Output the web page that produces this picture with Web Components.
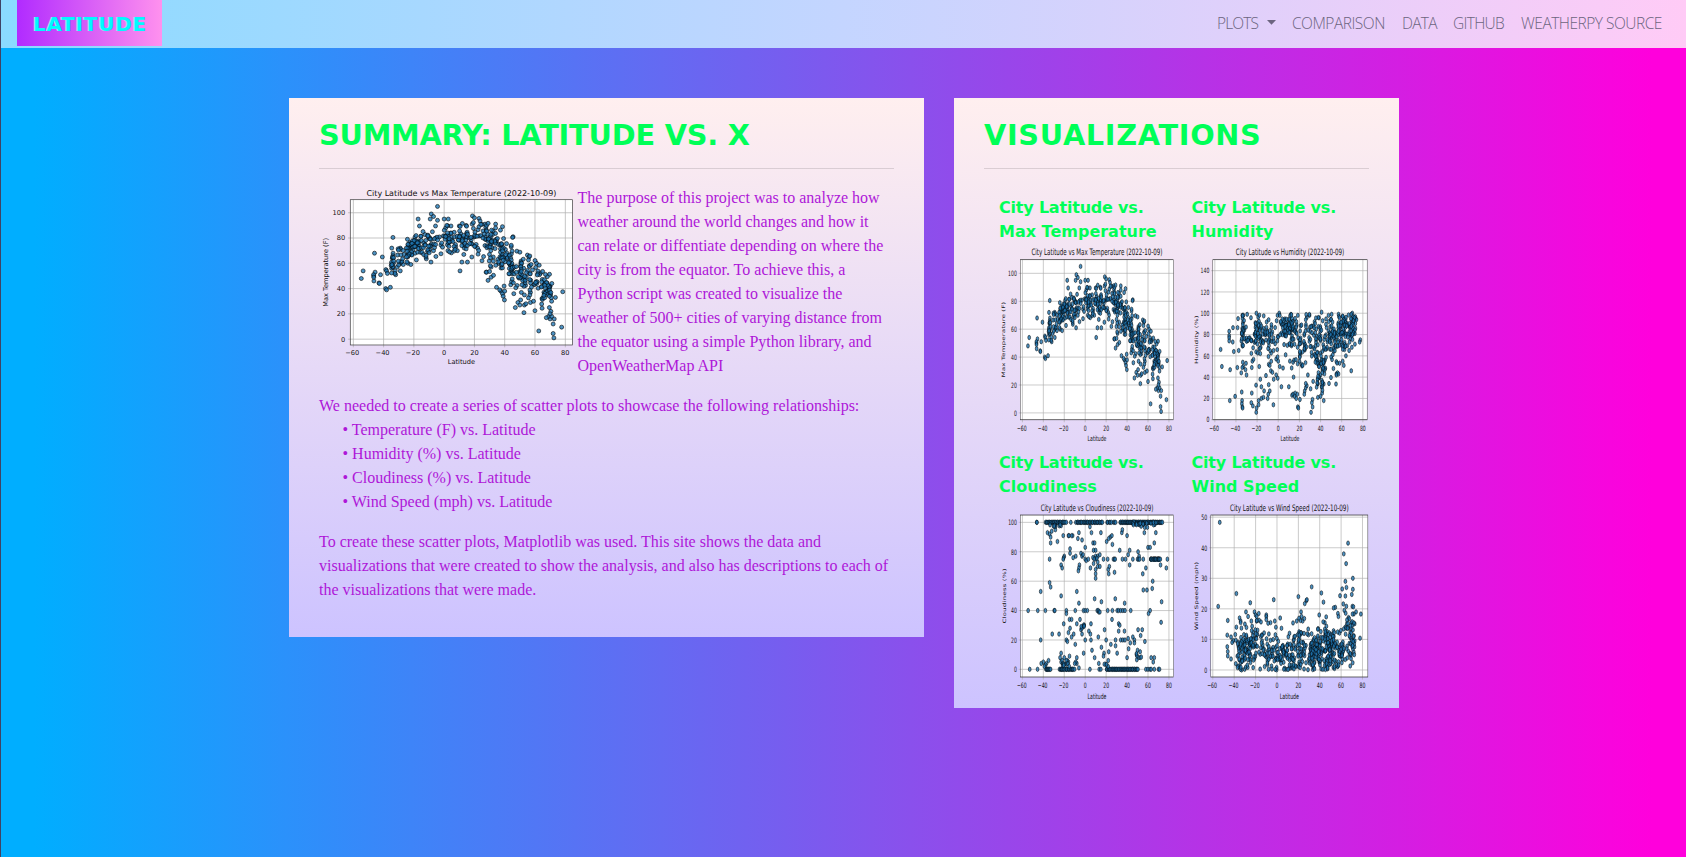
<!DOCTYPE html>
<html lang="en">
<head>
<meta charset="utf-8">
<title>Latitude</title>
<style>
html{height:100%}
body{margin:0;min-height:857px;box-sizing:border-box;border-left:1px solid #3f4364;background:linear-gradient(90deg,#00aeff 2%,#2b91fb 17%,#8a50ec 54%,#d41ee2 83%,#ff00dc 98%);font-family:"Liberation Serif",serif;overflow:hidden}
</style>
</head>
<body>
<latitude-page></latitude-page>
<script>
/* Base class: clones the markup of the element into an open shadow root. */
class Base extends HTMLElement{
  constructor(){super();const t=document.createElement('template');t.innerHTML=this.constructor.html;this.attachShadow({mode:'open'}).append(t.content.cloneNode(true));}
}

class NavLink extends Base{
  static html=`<style>:host{display:block;font:300 15.5px/24px "Open Sans",sans-serif;color:#6c6580;white-space:nowrap}
  a{display:flex;align-items:center;justify-content:space-between}
  svg{display:none}:host([caret]) svg{display:block;margin-top:-2px}</style>
  <a><span><slot></slot></span><svg width="9" height="5" viewBox="0 0 9 5"><path d="M0 0H9L4.5 4.8Z" fill="currentColor"/></svg></a>`;
}
customElements.define('nav-link',NavLink);

class SiteNav extends Base{
  static html=`<style>
  :host{display:flex;height:48px;align-items:flex-start;justify-content:space-between;padding:0 24px 0 16px;box-sizing:border-box;background:linear-gradient(90deg,#8adbff,#c4d5ff 50%,#ffcbf6)}
  .brand{width:145px;height:46px;box-sizing:border-box;padding-left:16px;background:linear-gradient(90deg,#b12bff,#ff91ee);font:bold 20px/48px "DejaVu Sans",sans-serif;color:#00fbff;text-shadow:-1px 0 0 #a5c8f1;letter-spacing:.75px;white-space:nowrap}
  nav{display:flex;padding-top:11px}
  nav-link{margin-left:16px}
  </style><div class="brand">LATITUDE</div>
  <nav><nav-link caret style="width:59px;letter-spacing:-.9px">PLOTS</nav-link><nav-link style="width:94px;letter-spacing:-.5px">COMPARISON</nav-link><nav-link style="width:35px;letter-spacing:-.7px">DATA</nav-link><nav-link style="width:52px;letter-spacing:-.7px">GITHUB</nav-link><nav-link style="width:141px;letter-spacing:-.5px">WEATHERPY SOURCE</nav-link></nav>`;
}
customElements.define('site-nav',SiteNav);

class InfoCard extends Base{
  static html=`<style>
  :host{display:block;box-sizing:border-box;padding:18px 30px 0;background:linear-gradient(#ffefef,#cdc3ff)}
  h2{margin:0;height:52px;font:bold 28.8px/38px "DejaVu Sans",sans-serif;color:#00ff57;white-space:nowrap;letter-spacing:var(--ls,0)}
  .rule{height:1px;background:rgba(0,0,0,.12);margin-bottom:16px}
  </style><h2><slot name="title"></slot></h2><div class="rule"></div><slot></slot>`;
}
customElements.define('info-card',InfoCard);

/* Small deterministic generator, so that the clouds of cities stay the same. */
function rng(s){return()=>{s|=0;s=s+0x6D2B79F5|0;let t=Math.imul(s^s>>>15,1|s);t=t+Math.imul(t^t>>>7,61|t)^t;return((t^t>>>14)>>>0)/4294967296}}
const pairs=s=>s.trim().split(/\s+/).map(p=>p.split(',').map(Number));
const gauss=r=>(r()+r()+r()+r()-2)*1.72;
function lerp(t,x){for(let i=1;i<t.length;i++)if(x<=t[i][0]){const[a,b]=t[i-1],[c,d]=t[i];return b+(d-b)*(x-a)/(c-a)}return t[t.length-1][1]}

const temp=pairs(`-54.7,48 -53.5,54 -46,68 -45.6,53 -46.5,50 -46.4,46 -46.6,51 -46.5,49 -43,44.5 -42.8,44 -42,51 -40.8,65 -38.5,55 -38,54 -38.6,40 -38,39 -35.5,41 -37.5,52 -33.8,80.5 -34.6,72 -29,72 -29,54 -32,51 -32.3,54 -17.2,95 -16.3,89.5 -8.5,99 -7,97 -9.2,95 -4.4,105 -4.4,94 -5.7,89.5 0,95 2.7,95 4.5,89.5 1,88 -8.7,61 -11.8,63.5 -12,65 -7,70 11.7,61 15.4,61 10.5,54 13,67 18.3,65 13.3,72 18.7,97.5 20,96 23,95.5 23.7,93.5 12,91.5 10,89.5 14.5,90 18.5,91 34,91 34,88 27,91 27.5,88.5 28,90 38.5,89 45.5,81 45.2,80.5 44.3,73 25,62 27.7,53 28,53 29,46.5 31,49 30,53.5 32.6,50.5 34.6,41 31,57 30.5,58 37.5,38 36.7,39 39.6,42 38.5,36 39,34 39.8,31 40,38 44,43 44.5,45.5 46,36 47,25 48.7,29 50,27 50.5,31 51,37 52.7,21 53,27 54,28 53,35 60,22.5 62.5,6.5 55,66.5 56,65 61,60 62.8,58.5 70,16 69,18 67.5,17 70.5,22 72,12 72.7,16 72,4.5 72.5,1 77.6,9.5 78.3,37.5 73.5,33 71,30 69.5,25 71,18 70,20 57,37 57,29 59,30 -33.7,68 -33.9,66 -34.2,64 -33.5,60 -34.4,58 -32.6,52 -31,57 -29,60 -27,59 -24,60 -22,59 -34.7,56`);
{const r=rng(11);const mean=[[-36,58],[-32,61],[-26,67],[-22,74],[-15,76],[-5,78],[8,78],[20,82],[28,77],[34,73],[40,65],[48,54],[54,51],[60,46],[66,41],[71,39]];
 const bands=[[-35,-33,11,5],[-31,-25,12,5],[-25,-16,52,4.5],[-16,0,46,5.5],[0,15,58,5],[15,30,44,7],[29,38,44,7],[37,45,42,7],[44,57,48,8],[56,66,32,8],[64,71.5,36,5]];
 for(const[a,b,n,s]of bands)for(let i=0;i<n;i++){const x=a+(b-a)*r();temp.push([x,Math.min(96,lerp(mean,x)+gauss(r)*s)])}}

const hum=pairs(`-54.5,66 -53.3,50 -45.8,18 -45.5,47 -46.4,83 -46.4,79 -46.4,77 -46.4,74 -42.8,86.5 -42,64 -43,73 -38.5,86.5 -38,95 -37.4,65 -38.7,49 -40.8,22 -34,98 -33,98 -34.5,26 -34.2,18 -34.4,15 -34,12 -33.7,11 -29.4,99 -20.7,100 -30,42 -35,44 -33.5,54 -33,50 -34,49 -31,47 -30.5,53 -24.5,55 -25,49 -25,25 -25.5,16 -24,13 -20.8,7 -20.5,11 -18.5,18 -18.6,14 -21,32.5 -17,38 -16,31 -13.4,27 -18,50 -16,20 -14,21 -9.5,24 -10,20 -8,27 -9,33 -11.6,41.5 -4.6,14 -4.3,38 -7,46 -5.5,44.5 -2,42 -.5,39 -9,52 1.4,50 4.5,48.5 -2,57 0,55 3,31 10,31 14.5,40 -8,51 -.7,98 1,100 1.5,98 12,99 18.5,98 7,61 11,55 14,54 15,56 20,55 22,52 22.5,50.5 13,23 14,24 16,25 15.5,22 18,24 20.5,19 18.5,12 19,11 17,20 25,27 24.6,24 26,30 27,32 26,34 28,42 30.6,29 33,36 32.4,19 31,7 32.5,12 31.8,16 37.5,21 40,22 43,18 41.6,25 41,31 43,33.5 48,34 54.6,33.5 55,43 56,44 57,43 55,42 58,53 62,51 61,55 69,46 64,60 67,65 77.6,75 77,73 73.3,95 74,94 72,96 72.5,71 70,100 69,99 57,99 61,97 50.5,99 47.5,98 41,101 42,93 29.6,98 27,96 26,94 30,87`);
{const r=rng(29);const bands=[[-35,-32,24,84,8],[-31,-27,7,78,9],[-26,-16,50,79,10],[-16,0,48,80,10],[3,14,52,87,6],[0,14,10,78,9],[12,32,48,77,13],[19,32,18,67,5],[33,40,22,73,14],[35,46,26,50,8],[36,42,14,36,4],[34,55,62,75,14],[48,58,32,74,14],[56,73,72,87,8],[60,71,20,74,7]];
 for(const[a,b,n,m,s]of bands)for(let i=0;i<n;i++){let y=m+gauss(r)*s;if(y>99)y=92-r()*14;hum.push([a+(b-a)*r(),Math.max(8,y)])}}

const cloud=pairs(`-54.5,40 -45.3,40 -38,40 -29.6,40 -29,40 -18,40 -18,38 -9.5,40 -1.6,40 0,40 2,40 11.5,40 12.5,40 13,39 14,39 21.5,40 26,40 30.6,40 32,40 34,40 36,40 38,40 43.5,40 62,40 60.5,38 -42.5,53 -34,59 -33,56 -23,50 -8,53 -6,45 9,48 15.5,46 28.7,48 37.7,45 73,46 72.5,32 55.5,54 59,54 64,55 64.5,60 55,65 -34,75 -33,86 -36,93 -34,92 -33,90 -32,94 -28.5,95 -26.5,87 -21,91 -16,91 -15.5,91 -12,91 -13,91 -14.5,82 -14.5,79 -20,77 -20.5,76 -21,75 -23,71 -22,69 -9,77 -11.5,76 -6,93 -7,89 -3,88 0,83 -4,79 -3,77 -2,78 0,75 1,74 3,75 4.5,97 6,93 5,69 7.5,86 9,86 8,81 10,81 10,77 12,77 14,78 8,72 10,68 12,70 12,73 14,70 10,65 10,62 -5.5,71 -6,69 -6.5,67 20.5,87 24,90 22.5,89 25.5,91 26,85 15,93 17.5,75 21.5,75 22,68 22.5,65 23,70 28,66 27,75 28,75 28.6,75 33,81 35,93 35.5,95 35.6,75 38.5,75 40,91 42.5,81 41,78 42.5,71 45.5,75 50.5,80 51.5,77 50,75 51,75 52,75 55.5,75 56.5,93 58,69 60,83 62,83 66,86 67.5,93 62.7,75 65,75 66,75 67.5,75 69,75 70,75 71,75 72,71 78.5,75 77.5,69 -42.5,20 -31.5,24 -25,24 -18,20 -17,19 -20.5,31 -15,34 -13,34 -16,25 -14.5,28 -13,22 -11,24 -9.5,17 -8,31 -5,34 -4,27 -3,24 -2,29 -1,30 0,20 3.5,26 5.5,31 5,24 5.5,20 6.5,13 -1.5,11 12.5,22 15.5,15 18.5,27 20,20 22.5,12 24.5,17 25.6,34 29,16 29,20 32,31 33,30 32,26 37.5,26 34,20 36,20 38,20 41,21 41.5,14 45.5,22 47,20 47,18 50.5,27 54.5,27 53,23 57,19 43,18 50,13 52.5,12 51,8 52.5,8 49,10 40,8 30.5,11 22,6 18,11 17.5,9 9,8 13,4 63,8 66,8 65,5 -53,0 -45.5,0 -37.5,0 4.5,0 -6,1 -8,4 -8,8 -9,5 -10,4 -15,9 -16,5 -17,6 -23,11 -24,8 -23,5 -22,6 -20,8 -18,6 -35,6 -37,4 -38,3 -40,5 -42,4 -39,2 58,0 60,0 62,0 63,0 66,0 70,0 71,0`);
{const r=rng(5);
 /* rows of equal values, spread evenly along the latitude */
 for(const[a,b,n,y]of[[-46.5,-46,2,100],[-38,-18,26,100],[-14,-13,1,100],[-9,17,32,100],[20,30,8,100],[33,74,62,100],[-37,-33,7,0],[-25,-10,20,0],[13,16,2,0],[20,51,42,0],[62,72,14,75]])for(let i=0;i<n;i++)cloud.push([a+(b-a)*(i+r())/n,y]);
 for(const[a,b,n,y]of[[-35,-22,9,98],[42,72,22,98.7],[-22,-14,8,3],[46,54,4,9],[-4,1,4,29],[5,14,4,75],[18,22,4,3]])for(let i=0;i<n;i++)cloud.push([a+(b-a)*r(),y+gauss(r)*.9])}

const wind=pairs(`-53.5,48.3 -55,20.8 -46,16.2 -38,25 -25,22 -3,23 3,17 20,24 27.5,22.7 28,23 26,21.7 32.5,27.2 41.5,25.2 43.5,22.2 39.5,18 54.5,20.5 53,20.3 66.5,41.5 62.5,38 64.7,34.8 71,30 64,29 65,27 61,26.5 71,26.4 59,24.3 64,24.2 70,24.7 62,21.6 70.5,20.8 71.5,20.7 74,19 78.5,18.3 77.7,10.4 63,19.5 57,18.5 57.5,17.5 -29,19 -27,17.5 -21,19 -20,18 -17,18.5 -19,17.5 -10,18 -10,17.5 -10,16.5 -35,17 -34,16 -34,15.5 -30,15 -46.5,11.4 -46.5,7.6 -46,6 -46,4.6 -43,10.8 -41,9.6 -42,9 -43,3.6 -24,16 -19,16 -6,15.5 -2,16 -1,14 15,15.4 18.5,16 22.5,19 23,17.5 24,16 22,16.2 -39,11.6 -38,14 29,0.1 57,1.2 68.5,1.3`);
{const r=rng(77);for(const[a,b,n,m,s]of[[-39,-30,28,7,3.3],[-35,-24,34,5,3.4],[-30,-13,66,8,3.5],[-13,0,46,5,4.2],[0,20,84,5,3.6],[20,34,62,6,4.2],[32,53,125,6,3.2],[36,54,32,11,3],[52,62,40,7,4],[60,73,42,8,3.5],[62,72,22,14,3]])for(let i=0;i<n;i++)wind.push([a+(b-a)*r(),Math.abs(m+gauss(r)*s)])}

const T=[-60,-40,-20,0,20,40,60,80];
const charts={
 main:{data:temp,name:'Max Temperature',yl:'Max Temperature (F)',tw:286,yw:103,lx:17,x:[-62,84.8],y:[-4.6,110.3],step:20,top:100,box:[6.9,12.55,388.6,275.4]},
 temp:{data:temp,name:'Max Temperature',yl:'Max Temperature (F)',tw:286,yw:103,lx:17.7,x:[-62,84.5],y:[-4.9,109.8],step:20,top:100,box:[7.5,11.9,388.6,271.7],soft:1},
 humidity:{data:hum,name:'Humidity',yl:'Humidity (%)',tw:235,yw:66,lx:18.7,x:[-61.9,84.1],y:[0,150.3],step:20,top:140,box:[8.9,11.9,386,271.7],soft:1},
 cloudiness:{data:cloud,name:'Cloudiness',yl:'Cloudiness (%)',tw:246,yw:74,lx:18.4,x:[-62,84.5],y:[-5.2,105],step:20,top:100,box:[7.5,11.7,388.6,268.5],soft:1},
 wind:{data:wind,name:'Wind Speed',yl:'Wind Speed (mph)',tw:253,yw:92,lx:23.5,x:[-61.9,85],y:[-2.3,50.7],step:10,top:50,box:[13.9,11.7,379.5,268.5],soft:1}
};
class ScatterPlot extends HTMLElement{
  connectedCallback(){
    if(this.shadowRoot)return;
    const c=charts[this.getAttribute('plot')],L=54,R=388.8,U=34.56,B=252;
    const X=v=>+(L+(v-c.x[0])/(c.x[1]-c.x[0])*(R-L)).toFixed(1),Y=v=>+(B-(v-c.y[0])/(c.y[1]-c.y[0])*(B-U)).toFixed(1);
    let g='',t='';
    for(const v of T){g+=`M${X(v)} ${U}V${B+3.5}`;t+=`<text x="${X(v)-(v<0?1.5:0)}" y="266.8" text-anchor="middle">${String(v).replace('-','−')}</text>`}
    for(let v=0;v<=c.top;v+=c.step){g+=`M${L-3.5} ${Y(v)}H${R}`;t+=`<text x="46.5" y="${Y(v)+3.7}" text-anchor="end">${v}</text>`}
    const dots=c.data.map(([a,b])=>`<circle cx="${X(a)}" cy="${Y(b)}" r="3"/>`).join('');
    this.attachShadow({mode:'open'}).innerHTML=`<style>:host{display:block}svg{display:block;width:100%;height:100%;overflow:visible}text{font:10px "DejaVu Sans",sans-serif;fill:#111}.soft .dots{filter:blur(.5px)}</style>
    <svg class="${c.soft?'soft':''}" viewBox="${c.box.join(' ')}" preserveAspectRatio="none">
    <rect x="${L}" y="${U}" width="${R-L}" height="${B-U}" fill="#fff"/>
    <path d="${g}" stroke="#b0b0b0" stroke-width="1.1" fill="none"/>
    <g class="dots" fill="#1f77b4" fill-opacity=".8" stroke="#000" stroke-opacity=".8" stroke-width="1.1">${dots}</g>
    <rect x="${L}" y="${U}" width="${R-L}" height="${B-U}" fill="none" stroke="#333" stroke-width="1"/>
    ${t}<text x="221.4" y="281" text-anchor="middle">Latitude</text>
    <text transform="translate(${c.lx+3.7} 143.3) rotate(-90)" text-anchor="middle" textLength="${c.yw}" lengthAdjust="spacingAndGlyphs">${c.yl}</text>
    <text x="221.4" y="28.6" style="font-size:12px" text-anchor="middle" textLength="${c.tw}" lengthAdjust="spacingAndGlyphs">City Latitude vs ${c.name} (2022-10-09)</text></svg>`;
  }
}
customElements.define('scatter-plot',ScatterPlot);

class PlotTile extends Base{
  static html=`<style>:host{display:flex;flex-direction:column;font:bold 16px/24px "DejaVu Sans",sans-serif;color:#00ff57;white-space:nowrap}
  .lead{letter-spacing:-.2px}
  .t{position:relative;top:1px}</style><div class="t"><div class="lead">City Latitude vs.</div><slot name="name"></slot></div><slot></slot>`;
}
customElements.define('plot-tile',PlotTile);

class LatitudePage extends Base{
  static html=`<style>
  :host{display:block}
  main{display:flex;align-items:flex-start;gap:30px;padding:50px 0 0 288px}
  .summary{width:635px;height:539px;--ls:-.22px}
  .visuals{width:445px;height:610px;--ls:.66px}
  .intro{display:flex;height:192px}
  .intro scatter-plot{width:258px;height:184px;flex:none}
  .intro p{margin-left:.5px}
  p{margin:0 0 16px;font:16px/24px "Liberation Serif",serif;color:#ae17d8;white-space:nowrap;padding-top:1px;margin-bottom:15px}
  .item{display:block;padding-left:23.5px}
  .tiles{display:grid;grid-template-columns:178px 178px;column-gap:14.5px;padding:10px 0 0 15px}
  plot-tile{height:255px}
  plot-tile scatter-plot{width:178px;height:200px}
  </style>
  <site-nav></site-nav>
  <main>
  <info-card class="summary"><span slot="title">SUMMARY: LATITUDE VS. X</span>
  <div class="intro"><scatter-plot plot="main"></scatter-plot><p>The purpose of this project was to analyze how<br>weather around the world changes and how it<br>can relate or diffentiate depending on where the<br>city is from the equator. To achieve this, a<br>Python script was created to visualize the<br>weather of 500+ cities of varying distance from<br>the equator using a simple Python library, and<br>OpenWeatherMap API</p></div>
  <p style="margin-top:16px">We needed to create a series of scatter plots to showcase the following relationships:<span class="item">• Temperature (F) vs. Latitude</span><span class="item">• Humidity (%) vs. Latitude</span><span class="item">• Cloudiness (%) vs. Latitude</span><span class="item">• Wind Speed (mph) vs. Latitude</span></p>
  <p>To create these scatter plots, Matplotlib was used. This site shows the data and<br>visualizations that were created to show the analysis, and also has descriptions to each of<br>the visualizations that were made.</p>
  </info-card>
  <info-card class="visuals"><span slot="title">VISUALIZATIONS</span>
  <div class="tiles"><plot-tile><span slot="name">Max Temperature</span><scatter-plot plot="temp"></scatter-plot></plot-tile><plot-tile><span slot="name">Humidity</span><scatter-plot plot="humidity"></scatter-plot></plot-tile><plot-tile><span slot="name">Cloudiness</span><scatter-plot plot="cloudiness"></scatter-plot></plot-tile><plot-tile><span slot="name">Wind Speed</span><scatter-plot plot="wind"></scatter-plot></plot-tile></div>
  </info-card>
  </main>`;
}
customElements.define('latitude-page',LatitudePage);
</script>
</body>
</html>
